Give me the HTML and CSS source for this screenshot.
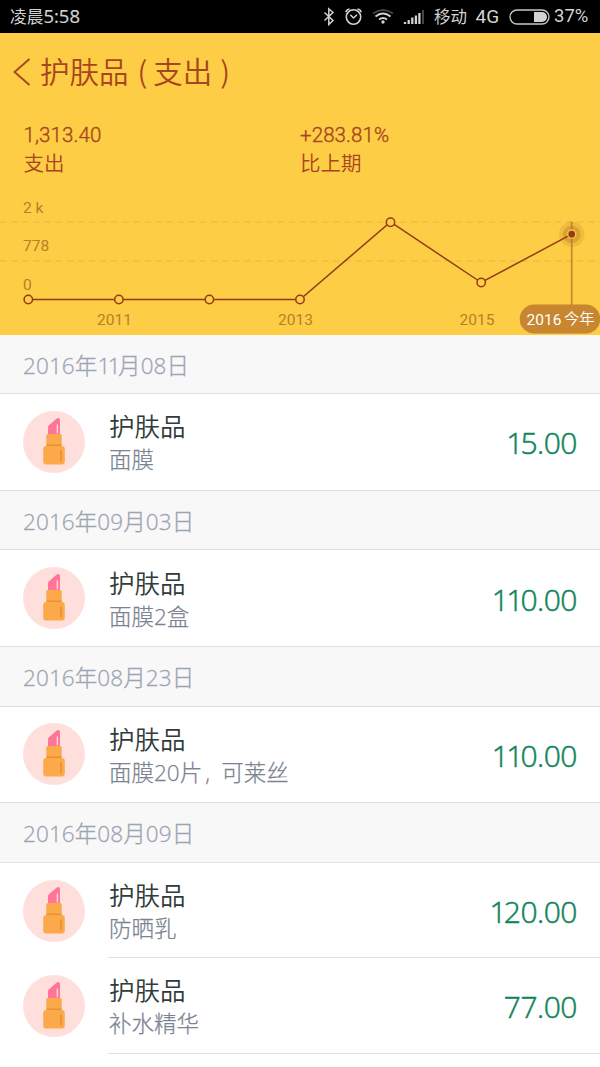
FILE: index.html
```html
<!DOCTYPE html>
<html lang="zh-CN">
<head>
<meta charset="utf-8">
<title>护肤品（支出）</title>
<link rel="stylesheet" href="styles.css">
</head>
<body>
<svg class="defs" width="0" height="0">
  <symbol id="lipstick" viewBox="0 0 62 62">
    <circle cx="31" cy="31" r="31" fill="#ffdfdb"/>
    <path d="M25 24V16.200Q25 15 26 14.200L33.500 7.700Q35 6.400 36.500 7.500Q37 8 37 9V24Z" fill="#ff7598"/>
    <path d="M34.400 14V21.700" stroke="#ffd0dc" stroke-width="1.500" stroke-linecap="round"/>
    <path d="M23.300 36V24.500Q23.300 23 25 23H37Q38.700 23 38.700 24.500V36Z" fill="#fba94b"/>
    <path d="M23.500 34.300H38.500" stroke="#e8922f" stroke-width="1.500"/>
    <rect x="20.200" y="35" width="21.600" height="18.400" rx="3" fill="#fba94b"/>
    <path d="M38 40V49.500" stroke="#e8922f" stroke-width="1.700" stroke-linecap="round"/>
  </symbol>
</svg>
<div class="statusbar">
  <span class="time">凌晨<span class="clock">5:58</span></span>
  <svg class="status-icons" width="108" height="33" viewBox="0 0 108 33" fill="none" stroke="#d2d2d2">
    <path d="M4.500 12.500L13 20.500L8.800 24.500V8.800L13 12.500L4.500 20.500" stroke-width="1.500"/>
    <circle cx="33.500" cy="17" r="7.200" stroke-width="1.600"/>
    <path d="M30.300 14.800L33.500 18L37 14.800M25.800 12.200Q26.500 9.500 29.500 9M41.200 12.200Q40.500 9.500 37.500 9" stroke-width="1.500"/>
    <path d="M53 13.500Q63 6.500 73 13.500" stroke="#444" stroke-width="1.800"/>
    <path d="M55.500 16.500Q63 10.500 70.500 16.500M59 19.500Q63 16.500 67 19.500" stroke-width="1.900"/>
    <circle cx="63" cy="22" r="1.700" fill="#d2d2d2" stroke="none"/>
    <path d="M85 24V22M88.700 24V20M92.300 24V17.500M95.900 24V15.500M99.400 24V13" stroke-width="2.300"/>
    <path d="M103 24V10" stroke="#444" stroke-width="2"/>
  </svg>
  <span class="carrier">移动</span>
  <span class="net">4G</span>
  <svg class="battery" width="41" height="16" viewBox="0 0 41 16">
    <rect x="1" y="1" width="39" height="14" rx="7" fill="none" stroke="#c8c8c8" stroke-width="1.300"/>
    <path d="M25 3H33A5 5 0 0 1 33 13H25Z" fill="#d2d2d2"/>
  </svg>
  <span class="percent">37%</span>
</div>
<header class="summary">
  <div class="titlebar">
    <svg class="back" width="18" height="28" viewBox="0 0 18 28" fill="none" stroke="#a8451f" stroke-width="1.900"><path d="M16.500 1L1.500 14L16.500 27"/></svg>
    <h1 class="title">护肤品<span class="open">(</span>支出<span class="close">)</span></h1>
  </div>
  <div class="stats">
    <div class="stat"><div class="stat-value">1,313.40</div><div class="stat-label">支出</div></div>
    <div class="stat"><div class="stat-value">+283.81%</div><div class="stat-label">比上期</div></div>
  </div>
  <svg class="chart" width="600" height="144" viewBox="0 190 600 144">
    <path class="grid" d="M0 222H600M0 261H600"/>
    <text class="axis" x="23" y="212.500">2 k</text>
    <text class="axis" x="23" y="251">778</text>
    <text class="axis" x="23" y="290">0</text>
    <text class="axis" x="97" y="325">2011</text>
    <text class="axis" x="278" y="325">2013</text>
    <text class="axis" x="459.500" y="325">2015</text>
    <path class="marker" d="M571.700 222V306"/>
    <circle cx="571.700" cy="234.200" r="12.700" fill="#b5741f" opacity=".18"/>
    <circle cx="571.700" cy="234.200" r="8.800" fill="#b5741f" opacity=".35"/>
    <path class="line" d="M28.300 299.500H300L390.500 222L481.200 282.500L571.700 234.200"/>
    <g class="points">
      <circle cx="28.300" cy="299.500" r="4.200"/><circle cx="118.900" cy="299.500" r="4.200"/>
      <circle cx="209.400" cy="299.500" r="4.200"/><circle cx="300" cy="299.500" r="4.200"/>
      <circle cx="390.500" cy="222.200" r="4.200"/><circle cx="481.200" cy="282.500" r="4.200"/>
    </g>
    <circle cx="571.700" cy="234.200" r="4" fill="#953b18" stroke="#fccd45" stroke-width="1.300"/>
    <rect x="519.700" y="304.500" width="80.600" height="29" rx="14.500" fill="#c7862f"/>
    <text class="current" x="526.500" y="324.500">2016</text>
    <text class="current-label" x="564" y="324">今年</text>
  </svg>
</header>
<main class="records">
  <section class="day">
    <h2 class="date">2016年<span class="one">1</span><span class="one">1</span>月08日</h2>
    <div class="record"><svg class="icon"><use href="#lipstick"/></svg><div class="body"><div class="info"><div class="name">护肤品</div><div class="note">面膜</div></div><div class="amount"><span class="one">1</span>5.00</div></div></div>
  </section>
  <section class="day">
    <h2 class="date">2016年09月03日</h2>
    <div class="record"><svg class="icon"><use href="#lipstick"/></svg><div class="body"><div class="info"><div class="name">护肤品</div><div class="note">面膜2盒</div></div><div class="amount"><span class="one">11</span>0.00</div></div></div>
  </section>
  <section class="day">
    <h2 class="date">2016年08月23日</h2>
    <div class="record"><svg class="icon"><use href="#lipstick"/></svg><div class="body"><div class="info"><div class="name">护肤品</div><div class="note">面膜20片<span class="comma">,</span>可莱丝</div></div><div class="amount"><span class="one">11</span>0.00</div></div></div>
  </section>
  <section class="day">
    <h2 class="date">2016年08月09日</h2>
    <div class="record inset"><svg class="icon"><use href="#lipstick"/></svg><div class="body"><div class="info"><div class="name">护肤品</div><div class="note">防晒乳</div></div><div class="amount"><span class="one">1</span>20.00</div></div></div>
    <div class="record inset"><svg class="icon"><use href="#lipstick"/></svg><div class="body"><div class="info"><div class="name">护肤品</div><div class="note">补水精华</div></div><div class="amount">77.00</div></div></div>
  </section>
</main>
</body>
</html>
```
FILE: styles.css
```css
* { box-sizing: border-box; }
body { margin: 0; width: 600px; height: 1067px; overflow: hidden; background: #fff; font-family: Roboto, "Noto Sans CJK SC", sans-serif; }
.defs { position: absolute; }
.statusbar { height: 33px; display: flex; align-items: center; background: #000; color: #d2d2d2; font-size: 17px; line-height: 35px; white-space: nowrap; }
.time { width: 320px; padding-left: 10px; font-size: 16.700px; }
.clock { font-family: "Open Sans", sans-serif; font-size: 18.500px; -webkit-text-stroke: .2px; }
.status-icons { flex: none; }
.carrier { width: 41.500px; padding: 2px 0 0 6px; font-size: 16.500px; }
.net { width: 39.500px; padding-left: 6px; font-size: 19px; }
.battery { flex: none; }
.percent { padding-left: 4px; font-size: 18.500px; }
.summary { height: 301.600px; background: #fccd45; color: #a8451f; }
.titlebar { height: 77px; display: flex; align-items: center; padding-left: 13px; }
.back { flex: none; }
.title { margin: -3px 0 0 9px; font-family: "Noto Sans CJK SC DemiLight", "Noto Sans CJK SC", sans-serif; font-size: 29.500px; line-height: 40px; font-weight: 350; white-space: nowrap; }
.open { padding: 0 6px 0 9px; }
.close { padding-left: 8px; }
.stats { height: 80px; padding: 12px 0 0 23.500px; display: grid; grid-template-columns: 276.500px 1fr; }
.stat-value { font-size: 20.500px; line-height: 27px; letter-spacing: .1px; font-weight: 300; -webkit-text-stroke: .35px; }
.stat-label { font-size: 20.500px; line-height: 30px; font-weight: 350; }
.chart { display: block; }
.axis { font-size: 15.500px; fill: #b5802a; }
.current { font-size: 15.500px; fill: #fff; }
.current-label { font-size: 15.300px; font-weight: 350; fill: #fff; }
.grid { fill: none; stroke: #efbf3d; stroke-width: 1.600; stroke-dasharray: 6.500 4.600; }
.marker { stroke: #c7862f; stroke-width: 1.700; }
.line { fill: none; stroke: #953b18; stroke-width: 1.500; }
.points { fill: #fccd45; stroke: #953b18; stroke-width: 1.500; }
.day { height: 156.200px; }
.date { height: 59.600px; margin: 0; padding-left: 23px; background: #f8f8f8; border-bottom: 1px solid #e0e0e0; color: #9da4b3; font-family: "Open Sans", "Noto Sans CJK SC", sans-serif; font-size: 22.500px; line-height: 61px; font-weight: 300; letter-spacing: .1px; -webkit-text-stroke: .3px; }
.date .one { letter-spacing: -2.500px; }
.record { height: 96.600px; display: flex; align-items: center; padding-left: 23px; border-bottom: 1px solid #e0e0e0; }
.icon { width: 62px; height: 62px; flex: none; }
.body { flex: 1; height: 100%; margin-left: 23px; padding: 0 23px 0 1px; display: flex; align-items: center; justify-content: space-between; }
.info { padding-top: 3px; }
.name { color: #303b3a; font-size: 25.500px; line-height: 34px; font-weight: 350; }
.note { color: #7b8391; font-family: "Open Sans", "Noto Sans CJK SC", sans-serif; font-size: 22.500px; line-height: 32px; font-weight: 300; -webkit-text-stroke: .25px; }
.comma { display: inline-block; width: 19px; padding-left: 3px; }
.amount { padding-top: 2px; color: #11855b; font-family: "Open Sans", sans-serif; font-size: 30px; font-weight: 300; letter-spacing: -.5px; -webkit-text-stroke: .55px; }
.amount .one { letter-spacing: -2.800px; }
.inset { height: 95.500px; border-bottom: 0; }
.inset .body { border-bottom: 1px solid #e0e0e0; }
```
